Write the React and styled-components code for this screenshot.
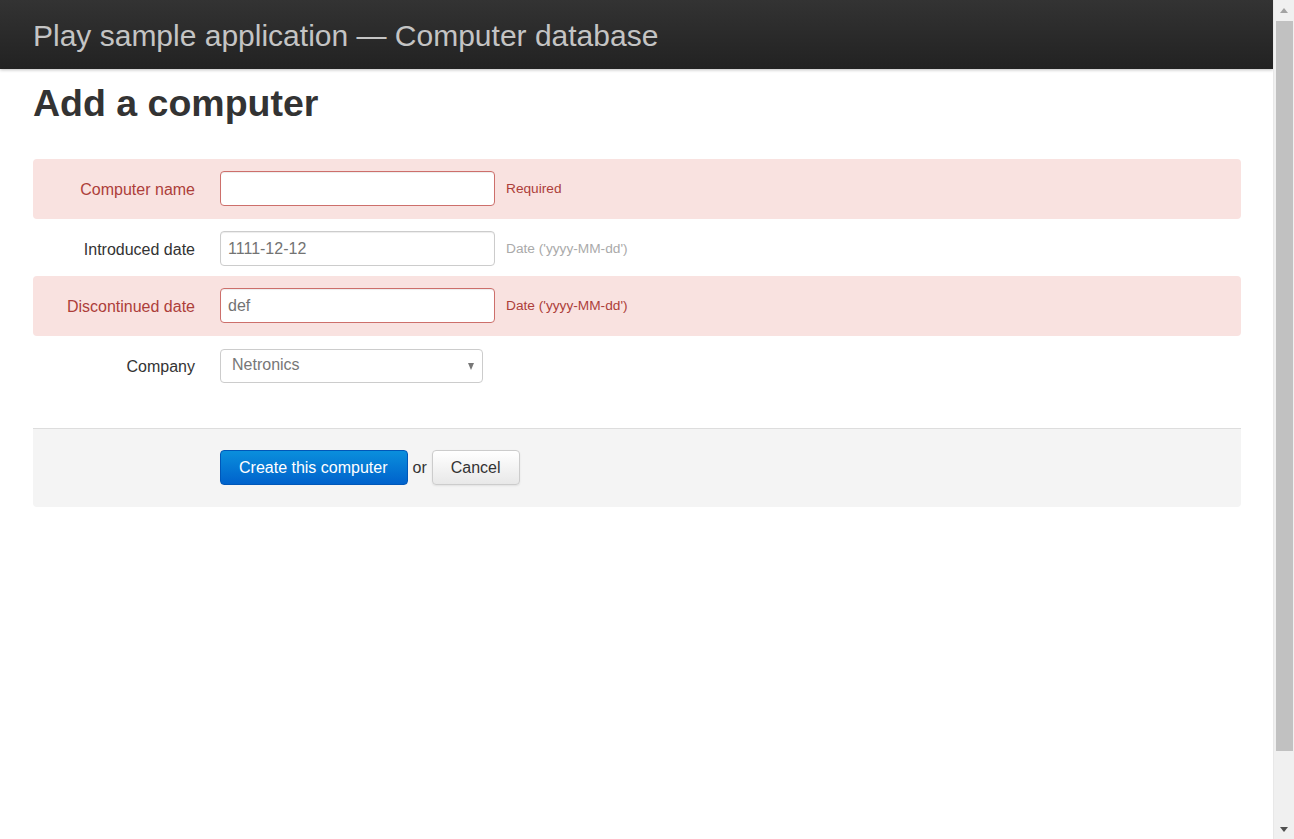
import styled, { createGlobalStyle } from 'styled-components';

const GlobalStyle = createGlobalStyle`
  html, body {
    margin: 0;
    padding: 0;
    background: #ffffff;
    font-family: "Liberation Sans", Arial, sans-serif;
    color: #333333;
    overflow: hidden;
  }
  * {
    box-sizing: border-box;
  }
`;

const Screen = styled.div`
  display: flex;
  height: 100vh;
  width: 100vw;
`;

const Page = styled.div`
  flex: 1;
  min-width: 0;
  overflow: hidden;
`;

const Navbar = styled.header`
  height: 69px;
  display: flex;
  align-items: center;
  padding: 3px 33px 0;
  background: linear-gradient(to bottom, #333333, #222222);
  box-shadow: 0 1px 3px rgba(0, 0, 0, 0.25);
`;

const Brand = styled.a`
  font-size: 30px;
  color: #c4c4c4;
  text-decoration: none;
`;

const Content = styled.main`
  padding: 0 32px 0 33px;
`;

const Title = styled.h1`
  margin: 13px 0 34px;
  font-size: 37.5px;
  font-weight: bold;
  color: #333333;
  line-height: normal;
`;

const Form = styled.form`
  display: flex;
  flex-direction: column;
`;

const Row = styled.div`
  display: flex;
  align-items: center;
  padding: ${(p) => (p.$error ? '12px 0 13px' : '12px 0 10px')};
  border-radius: 4px;
  background: ${(p) => (p.$error ? '#f9e2e0' : 'transparent')};
`;

const Label = styled.label`
  width: 162px;
  margin-right: 25px;
  padding-top: 3px;
  text-align: right;
  font-size: 16px;
  color: ${(p) => (p.$error ? '#ad3e3a' : '#333333')};
`;

const Input = styled.input`
  width: 275px;
  height: 35px;
  padding: 0 7px;
  font-family: inherit;
  font-size: 16px;
  color: #737373;
  background: #ffffff;
  border: 1px solid ${(p) => (p.$error ? '#cd6f6b' : '#cccccc')};
  border-radius: 4px;
  box-shadow: inset 0 1px 1px rgba(0, 0, 0, 0.075);
  outline: none;
`;

const Help = styled.span`
  margin-left: 11px;
  font-size: 13.7px;
  color: ${(p) => (p.$error ? '#ad3e3a' : '#aaaaaa')};
`;

const SelectBox = styled.div`
  width: 263px;
  height: 34px;
  margin-top: 1px;
  display: flex;
  align-items: center;
  justify-content: space-between;
  padding: 0 8px 2px 11px;
  border: 1px solid #cccccc;
  border-radius: 4px;
  background: #ffffff;
  font-size: 16px;
  color: #777777;
`;

const Caret = styled.span`
  width: 0;
  height: 0;
  border-left: 3.5px solid transparent;
  border-right: 3.5px solid transparent;
  border-top: 7px solid #777777;
  margin-top: 3px;
`;

const Actions = styled.div`
  margin-top: 35px;
  display: flex;
  align-items: center;
  padding: 21px 0 22px 187px;
  background: #f4f4f4;
  border-top: 1px solid #dddddd;
  border-radius: 0 0 4px 4px;
`;

const Button = styled.button`
  height: 35px;
  padding: ${(p) => (p.$primary ? '0 19px 0 18px' : '0 18px')};
  font-family: inherit;
  font-size: 16px;
  border-radius: 4px;
  cursor: pointer;
  color: ${(p) => (p.$primary ? '#ffffff' : '#333333')};
  background: ${(p) =>
    p.$primary
      ? 'linear-gradient(to bottom, #0a8fdc, #0062cc)'
      : 'linear-gradient(to bottom, #ffffff, #e8e8e8)'};
  border: 1px solid ${(p) => (p.$primary ? '#0057b8' : '#cccccc')};
  box-shadow: ${(p) =>
    p.$primary ? 'none' : 'inset 0 1px 0 rgba(255,255,255,0.2), 0 1px 2px rgba(0,0,0,0.08)'};
`;

const Or = styled.span`
  margin: 0 5px;
  font-size: 16px;
  color: #333333;
`;

const Scrollbar = styled.div`
  width: 21px;
  flex-shrink: 0;
  display: flex;
  flex-direction: column;
  align-items: center;
  background: #f0f0f0;
  border-left: 1px solid #e8e8e8;
`;

const ArrowSlot = styled.div`
  height: ${(p) => (p.$bottom ? '88px' : '21px')};
  width: 100%;
  display: flex;
  justify-content: center;
  align-items: ${(p) => (p.$bottom ? 'flex-end' : 'center')};
  padding-bottom: ${(p) => (p.$bottom ? '7px' : '0')};
`;

const Arrow = styled.span`
  width: 0;
  height: 0;
  border-left: 4px solid transparent;
  border-right: 4px solid transparent;
  ${(p) =>
    p.$down
      ? 'border-top: 5px solid #505050;'
      : 'border-bottom: 5px solid #a3a3a3;'}
`;

const Thumb = styled.div`
  width: 17px;
  flex: 1;
  background: #c1c1c1;
`;

const fields = [
  { label: 'Computer name', value: '', help: 'Required', error: true },
  { label: 'Introduced date', value: '1111-12-12', help: "Date ('yyyy-MM-dd')", error: false },
  { label: 'Discontinued date', value: 'def', help: "Date ('yyyy-MM-dd')", error: true },
];

export default function App() {
  return (
    <>
      <GlobalStyle />
      <Screen>
        <Page>
          <Navbar>
            <Brand href="#">Play sample application — Computer database</Brand>
          </Navbar>
          <Content>
            <Title>Add a computer</Title>
            <Form onSubmit={(e) => e.preventDefault()}>
              {fields.map((f) => (
                <Row key={f.label} $error={f.error}>
                  <Label $error={f.error}>{f.label}</Label>
                  <Input $error={f.error} defaultValue={f.value} />
                  <Help $error={f.error}>{f.help}</Help>
                </Row>
              ))}
              <Row>
                <Label>Company</Label>
                <SelectBox>
                  Netronics
                  <Caret />
                </SelectBox>
              </Row>
              <Actions>
                <Button $primary type="submit">Create this computer</Button>
                <Or>or</Or>
                <Button type="button">Cancel</Button>
              </Actions>
            </Form>
          </Content>
        </Page>
        <Scrollbar>
          <ArrowSlot>
            <Arrow />
          </ArrowSlot>
          <Thumb />
          <ArrowSlot $bottom>
            <Arrow $down />
          </ArrowSlot>
        </Scrollbar>
      </Screen>
    </>
  );
}
